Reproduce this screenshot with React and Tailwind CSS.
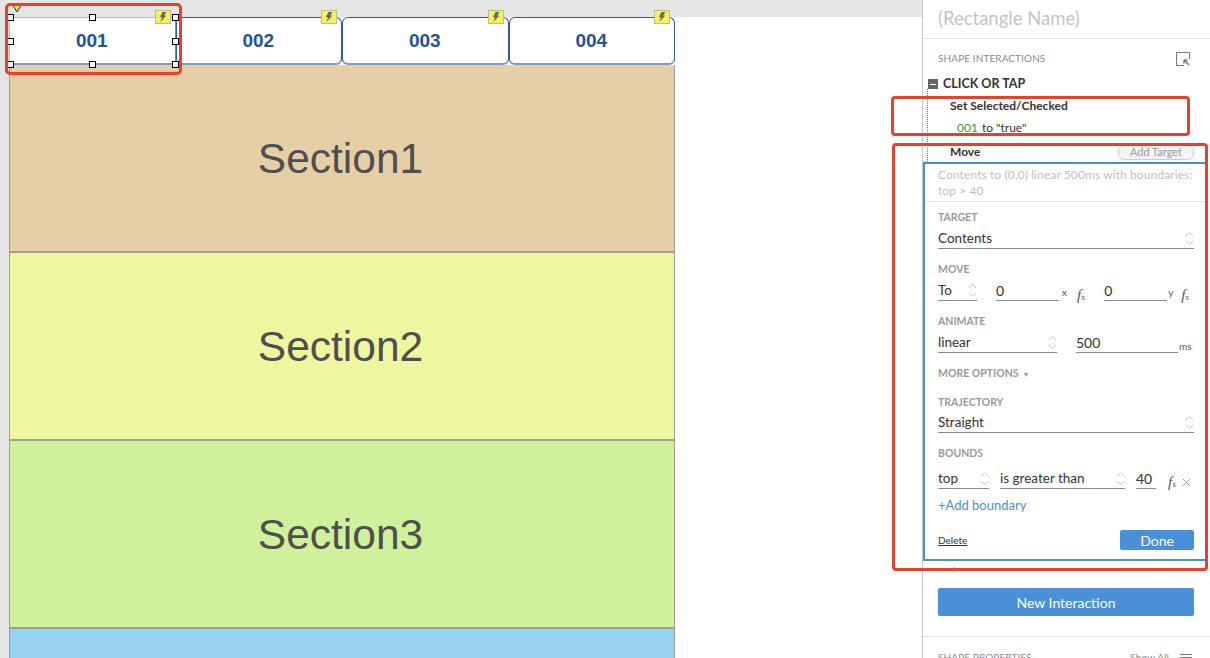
import React from "react";

const tabs = ["001", "002", "003", "004"];

const sections = [
  { name: "Section1", color: "bg-[#e6cfa6]" },
  { name: "Section2", color: "bg-[#eff6a0]" },
  { name: "Section3", color: "bg-[#d0f19c]" },
];

function Bolt() {
  return (
    <span className="absolute top-[-8px] right-[4px] flex h-[14px] w-[16px] items-center justify-center border border-[#bdbd84] bg-[#f6f163]">
      <svg width="8" height="10" viewBox="0 0 8 10">
        <path d="M3.5 0 L7.5 0 L5.2 3.4 L7.4 3.4 L1.4 10 L3 5.2 L0.8 5.2 Z" fill="#6b6b50" />
      </svg>
    </span>
  );
}

function Handle({ className }) {
  return <span className={"absolute h-[7px] w-[7px] border border-black bg-white " + className} />;
}

function Updown({ className = "" }) {
  return (
    <svg width="9" height="15" viewBox="0 0 9 15" className={"shrink-0 " + className}>
      <path d="M1 5 L4.5 1.5 L8 5 M1 10 L4.5 13.5 L8 10" fill="none" stroke="#c9c9c9" strokeWidth="1" />
    </svg>
  );
}

function Fx({ className = "" }) {
  return (
    <span className={"shrink-0 font-['Liberation_Serif',serif] text-[15px] leading-none text-[#555] italic " + className}>
      f<span className="text-[8px] not-italic">x</span>
    </span>
  );
}

function Label({ children, className = "" }) {
  return (
    <div className={"flex items-center text-[10.5px] font-bold text-[#999] uppercase " + className}>
      {children}
    </div>
  );
}

function Select({ value, className = "" }) {
  return (
    <div className={"flex h-[21px] items-center justify-between border-b border-[#8c8c8c] text-[13.5px] text-[#333] " + className}>
      <span>{value}</span>
      <Updown />
    </div>
  );
}

function Input({ value, className = "" }) {
  return (
    <div className={"flex h-[21px] items-center border-b border-[#8c8c8c] text-[14px] text-[#333] " + className}>
      {value}
    </div>
  );
}

function Canvas() {
  return (
    <div className="relative h-full w-[922px] shrink-0 overflow-hidden bg-white">
      <div className="h-[17px] bg-[#e5e5e5]" />
      <div className="absolute top-0 bottom-0 left-0 w-[9px] bg-[#e5e5e5]" />
      <div className="ml-[9px] w-[666px]">
        <div className="grid h-[48px] grid-cols-4">
          {tabs.map((t, i) => (
            <div
              key={t}
              className={
                "relative flex items-center justify-center rounded-[6px] border border-b-[2px] border-[#2c5a9e] border-b-[#7b9cc7] bg-white pt-[2px] pr-[1px] font-['Liberation_Sans',sans-serif] text-[19px] font-bold text-[#23529b] " +
                (i === 0 ? "rounded-none border-[#7fd0d8] border-r-[#5f8fc4] border-b-[#5cc4c4]" : "")
              }
            >
              {t}
              <Bolt />
            </div>
          ))}
        </div>
        {sections.map((s) => (
          <div
            key={s.name}
            className={"flex h-[188px] items-center justify-center border-x border-b-[2px] border-x-[#9d9d9d] border-b-[#9d9d9d] pt-[2px] pr-[3px] font-['Liberation_Sans',sans-serif] text-[42.5px] text-[#4f4f4f] " + s.color}
          >
            {s.name}
          </div>
        ))}
        <div className="h-[40px] border-x border-[#9d9d9d] bg-[#97d1f1]" />
      </div>

      {/* selection on tab 001 */}
      <svg width="10" height="8" viewBox="0 0 10 8" className="absolute top-[5px] left-[12px]">
        <path d="M1 0.5 L9 0.5 L5 7 Z" fill="#f3dc4a" stroke="#333" strokeWidth="1" />
      </svg>
      <Handle className="top-[14px] left-[7px]" />
      <Handle className="top-[14px] left-[89px]" />
      <Handle className="top-[14px] left-[172px]" />
      <Handle className="top-[38px] left-[7px]" />
      <Handle className="top-[38px] left-[172px]" />
      <Handle className="top-[61px] left-[7px]" />
      <Handle className="top-[61px] left-[89px]" />
      <Handle className="top-[61px] left-[172px]" />
    </div>
  );
}

function Panel() {
  return (
    <div className="h-full flex-1 overflow-hidden border-l border-[#c8c8c8] bg-white font-['Lato',sans-serif]">
      <div className="flex h-[39px] items-center border-b border-[#e3e3e3] pb-[1px] pl-[15px] text-[18.5px] text-[#c4c4c4]">
        (Rectangle Name)
      </div>

      <div className="flex h-[37px] items-center justify-between pt-[2px] pr-[19px] pl-[15px] text-[10px] tracking-[0.1px] text-[#8a8a8a]">
        <span>SHAPE INTERACTIONS</span>
        <svg width="15" height="14" viewBox="0 0 15 14">
          <path d="M8 13.5 H0.5 V0.5 H13.5 V7" fill="none" stroke="#777" strokeWidth="1" />
          <path d="M8 8 L13 13 M8 8 H11.5 M8 8 V11.5" fill="none" stroke="#777" strokeWidth="1.5" />
        </svg>
      </div>

      <div className="relative">
        <div className="absolute top-[13px] bottom-0 left-[4px] border-l border-dotted border-[#777]" />
        <div className="flex h-[14px] items-center pt-[2px] pl-[5px] text-[12.5px] font-bold text-[#333]">
          <span className="mr-[5px] flex h-[10px] w-[10px] items-center justify-center bg-[#666]">
            <span className="h-px w-[6px] bg-white" />
          </span>
          CLICK OR TAP
        </div>
        <div className="mt-[9px] flex h-[14px] items-center pl-[27px] text-[12px] font-bold text-[#333]">
          Set Selected/Checked
        </div>
        <div className="mt-[8px] flex h-[14px] items-center pl-[34px] text-[12px] text-[#333]">
          <span className="mr-[4px] text-[#3c9a35]">001</span> to "true"
        </div>
        <div className="mt-[9px] flex h-[16px] items-center justify-between pr-[16px] pl-[27px] text-[12px] font-bold text-[#333]">
          Move
          <span className="flex h-[15px] w-[76px] items-center justify-center rounded-[6px] border border-[#ccc] bg-[#f5f5f5] text-[11px] font-normal text-[#999]">
            Add Target
          </span>
        </div>
        <div className="h-[2px]" />
      </div>

      <div className="mr-[3px] h-[399px] border-2 border-[#4a90d9]">
        <div className="h-[38px] border-b border-[#e3e3e3] pt-[3px] pr-[4px] pl-[13px] text-[12px] leading-[16px] tracking-[0.1px] text-[#c0c0c0]">
          Contents to (0,0) linear 500ms with boundaries:
          <br />
          top &gt; 40
        </div>

        <div className="pr-[11px] pl-[13px]">
          <Label className="mt-[10px] h-[12px]">Target</Label>
          <Select value="Contents" className="mt-[4px]" />

          <Label className="mt-[15px] h-[12px]">Move</Label>
          <div className="mt-[4px] flex items-end">
            <Select value="To" className="w-[39px]" />
            <Input value="0" className="ml-[19px] w-[63px]" />
            <span className="mb-[4px] ml-[3px] w-[6px] text-[10px] leading-none text-[#555]">x</span>
            <Fx className="mb-[-2px] ml-[9px]" />
            <Input value="0" className="ml-[19px] w-[63px]" />
            <span className="mb-[4px] ml-[1px] w-[6px] text-[10px] leading-none text-[#555]">y</span>
            <Fx className="mb-[-2px] ml-[7px]" />
          </div>

          <Label className="mt-[15px] h-[12px]">Animate</Label>
          <div className="mt-[4px] flex items-end">
            <Select value="linear" className="w-[119px]" />
            <Input value="500" className="ml-[19px] w-[102px]" />
            <span className="mb-[2px] ml-[1px] text-[10px] leading-none text-[#555]">ms</span>
          </div>

          <Label className="mt-[15px] h-[12px]">
            More options <span className="ml-[4px] text-[7px]">▼</span>
          </Label>

          <Label className="mt-[17px] h-[12px]">Trajectory</Label>
          <Select value="Straight" className="mt-[3px]" />

          <Label className="mt-[15px] h-[12px]">Bounds</Label>
          <div className="mt-[8px] flex items-end">
            <Select value="top" className="w-[51px]" />
            <Select value="is greater than" className="ml-[11px] w-[125px]" />
            <Input value="40" className="ml-[11px] w-[20px]" />
            <Fx className="mb-[-1px] ml-[12px]" />
            <svg width="9" height="9" viewBox="0 0 9 9" className="mb-[2px] ml-[6px]">
              <path d="M1 1 L8 8 M8 1 L1 8" stroke="#999" strokeWidth="1" />
            </svg>
          </div>

          <div className="mt-[9px] flex h-[16px] items-center text-[13px] text-[#4a90d9]">+Add boundary</div>

          <div className="mt-[16px] flex items-center justify-between">
            <span className="text-[10px] text-[#333] underline">Delete</span>
            <span className="flex h-[20px] w-[74px] items-center justify-center rounded-[2px] bg-[#4a90d9] text-[14px] text-white">
              Done
            </span>
          </div>
        </div>
      </div>

      <div className="flex h-[27px] items-start pl-[28px] text-[11px] leading-[16px] text-[#999]">+</div>

      <div className="pr-[16px] pl-[15px]">
        <div className="flex h-[28px] items-center justify-center rounded-[2px] bg-[#4a90d9] text-[14px] text-white">
          New Interaction
        </div>
      </div>

      <div className="mt-[20px] flex h-[40px] items-start justify-between border-t border-[#e3e3e3] pt-[13px] pr-[18px] pl-[15px] text-[10px] tracking-[0.1px] text-[#8a8a8a]">
        <span>SHAPE PROPERTIES</span>
        <span className="flex items-center gap-[11px]">
          Show All
          <span className="flex w-[12px] flex-col gap-[2px]">
            <span className="h-[1px] bg-[#777]" />
            <span className="h-[1px] bg-[#777]" />
            <span className="h-[1px] bg-[#777]" />
          </span>
        </span>
      </div>
    </div>
  );
}

export default function App() {
  return (
    <div className="relative flex h-[658px] w-[1210px] overflow-hidden bg-white">
      <Canvas />
      <Panel />

      {/* red annotations */}
      <div className="absolute top-[3px] left-[5px] h-[72px] w-[177px] rounded-[5px] border-[3px] border-[#e8402a]" />
      <div className="absolute top-[96px] left-[891px] h-[40px] w-[299px] rounded-[4px] border-[3px] border-[#e8402a]" />
      <div className="absolute top-[143px] left-[892px] h-[428px] w-[316px] rounded-[4px] border-[3px] border-[#e8402a]" />
    </div>
  );
}
